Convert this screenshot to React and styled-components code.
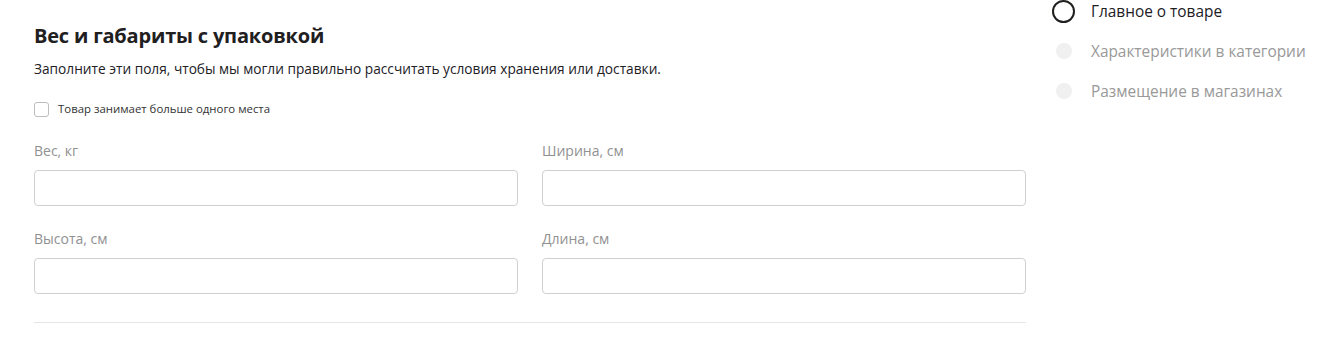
import React from 'react'
import styled, { createGlobalStyle } from 'styled-components'

const GlobalStyle = createGlobalStyle`
  body {
    margin: 0;
    background: #fff;
    font-family: "Open Sans", "Liberation Sans", sans-serif;
    color: #21201f;
  }
`

const Page = styled.div`
  display: flex;
  align-items: flex-start;
  gap: 25px;
  padding-left: 34px;
  width: 1325px;
  height: 345px;
  box-sizing: border-box;
  overflow: hidden;
`

const Main = styled.section`
  width: 992px;
  flex-shrink: 0;
  padding-top: 22px;
`

const Title = styled.h2`
  margin: 0;
  font-size: 20px;
  line-height: 28px;
  font-weight: 700;
  letter-spacing: -0.2px;
  color: #21201f;
`

const Lead = styled.p`
  margin: 9px 0 0;
  font-size: 13.7px;
  line-height: 20px;
  color: #21201f;
`

const CheckRow = styled.label`
  display: flex;
  align-items: center;
  gap: 9px;
  margin-top: 22px;
  font-size: 11.4px;
  line-height: 16px;
  color: #333;
`

const Box = styled.span`
  width: 15px;
  height: 15px;
  box-sizing: border-box;
  border: 1px solid #bdbdbd;
  border-radius: 3px;
  background: #fff;
`

const Grid = styled.div`
  display: grid;
  grid-template-columns: 1fr 1fr;
  column-gap: 24px;
  row-gap: 24px;
  margin-top: 25px;
`

const Field = styled.div`
  display: flex;
  flex-direction: column;
  gap: 10px;
`

const Label = styled.span`
  font-size: 14px;
  line-height: 18px;
  color: #919191;
`

const Input = styled.input`
  height: 36px;
  box-sizing: border-box;
  border: 1px solid #cfcfcf;
  border-radius: 4px;
  background: #fff;
  padding: 0 12px;
  font: inherit;
  outline: none;
`

const Divider = styled.hr`
  margin: 28px 0 0;
  border: 0;
  border-top: 1px solid #e6e6e6;
`

const Steps = styled.nav`
  display: flex;
  flex-direction: column;
  gap: 18px;
`

const Step = styled.div`
  display: flex;
  align-items: center;
  gap: 15px;
  height: 22px;
  font-size: 15.4px;
  color: ${p => (p.active ? '#21201f' : '#999')};
`

const Dot = styled.span`
  width: 25px;
  display: flex;
  justify-content: center;

  &::before {
    content: '';
    box-sizing: border-box;
    width: ${p => (p.active ? '23px' : '16px')};
    height: ${p => (p.active ? '23px' : '16px')};
    border-radius: 50%;
    border: ${p => (p.active ? '2px solid #21201f' : 'none')};
    background: ${p => (p.active ? '#fff' : '#f0f0f0')};
  }
`

const fields = ['Вес, кг', 'Ширина, см', 'Высота, см', 'Длина, см']

const steps = [
  { name: 'Главное о товаре', active: true },
  { name: 'Характеристики в категории' },
  { name: 'Размещение в магазинах' },
]

const App = () => (
  <>
    <GlobalStyle />
    <Page>
      <Main>
        <Title>Вес и габариты с упаковкой</Title>
        <Lead>
          Заполните эти поля, чтобы мы могли правильно рассчитать условия
          хранения или доставки.
        </Lead>
        <CheckRow>
          <Box />
          Товар занимает больше одного места
        </CheckRow>
        <Grid>
          {fields.map(f => (
            <Field key={f}>
              <Label>{f}</Label>
              <Input />
            </Field>
          ))}
        </Grid>
        <Divider />
      </Main>
      <Steps>
        {steps.map(s => (
          <Step key={s.name} active={s.active}>
            <Dot active={s.active} />
            {s.name}
          </Step>
        ))}
      </Steps>
    </Page>
  </>
)

export default App
